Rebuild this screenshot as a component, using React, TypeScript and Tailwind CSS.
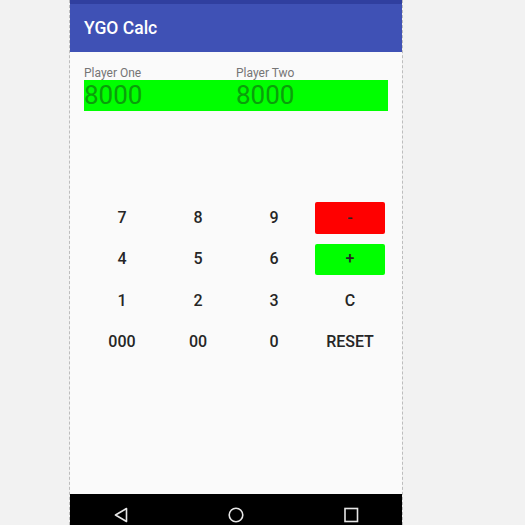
const keys = [
  { label: "7" },
  { label: "8" },
  { label: "9" },
  { label: "-", bg: "bg-[#ff0000]" },
  { label: "4" },
  { label: "5" },
  { label: "6" },
  { label: "+", bg: "bg-[#00ff00]" },
  { label: "1" },
  { label: "2" },
  { label: "3" },
  { label: "C" },
  { label: "000" },
  { label: "00" },
  { label: "0" },
  { label: "RESET" },
];

const NavIcons = () => (
  <div className="h-[31px] bg-black flex justify-center gap-[99px] pt-[13px]">
    <svg width="16" height="16" viewBox="0 0 16 16" fill="none" stroke="#e6e6e6" strokeWidth="1.6">
      <path d="M13.5 1.5 L2.5 8 L13.5 14.5 Z" strokeLinejoin="round" />
    </svg>
    <svg width="16" height="16" viewBox="0 0 16 16" fill="none" stroke="#e6e6e6" strokeWidth="1.6">
      <circle cx="8" cy="8" r="6.8" />
    </svg>
    <svg width="16" height="16" viewBox="0 0 16 16" fill="none" stroke="#e6e6e6" strokeWidth="1.6">
      <rect x="2" y="1.5" width="12.5" height="13" />
    </svg>
  </div>
);

export default function App() {
  return (
    <div className="w-[525px] h-[525px] overflow-hidden bg-[#f2f2f2] flex pl-[69px] font-['Roboto',sans-serif]">
      <div className="w-[334px] h-full border-x border-dashed border-[#bdbdbd] flex flex-col">
        <div className="h-[4px] bg-[#303f9f]" />
        <div className="h-[48px] bg-[#3f51b5] px-[14px] flex items-center text-white text-[17.5px] font-medium">
          YGO Calc
        </div>
        <div className="flex-1 bg-[#fafafa] px-[14px] pt-[14px]">
          <div className="grid grid-cols-2 text-[12px] leading-[14px] text-[#757575]">
            <span>Player One</span>
            <span>Player Two</span>
          </div>
          <div className="grid grid-cols-2 bg-[#00ff00] h-[31px] text-[26px] leading-[31px] text-[#0b9e0b]">
            <span>8000</span>
            <span>8000</span>
          </div>
          <div className="grid grid-cols-4 mt-[86px]">
            {keys.map((k) => (
              <div key={k.label} className="h-[41.5px] px-[3px] py-[5px]">
                <div
                  className={`h-full rounded-[2px] flex items-center justify-center text-[16px] font-medium text-[#262626] ${k.bg ?? ""}`}
                >
                  {k.label}
                </div>
              </div>
            ))}
          </div>
        </div>
        <NavIcons />
      </div>
    </div>
  );
}
